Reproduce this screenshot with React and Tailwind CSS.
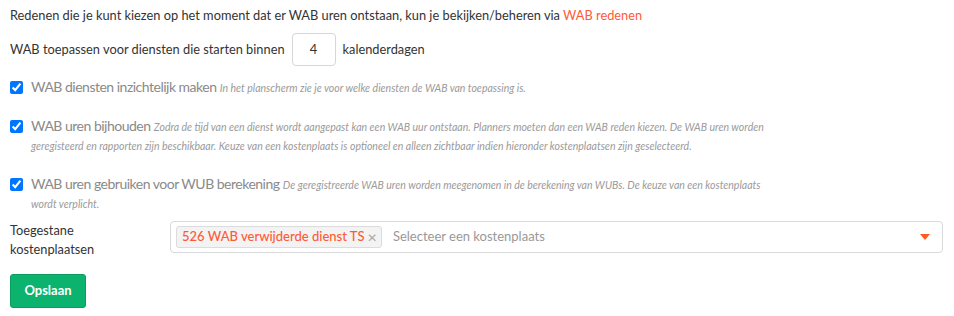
import React from 'react';

const Option = ({ title, children }) => (
  <label className="flex items-start gap-2">
    <input
      type="checkbox"
      checked
      readOnly
      className="mt-[3px] h-[13px] w-[13px] shrink-0 accent-[#0075ff]"
    />
    <span className="w-[745px] leading-[18px]">
      <span className="text-[14px] tracking-[-0.5px] text-[#8a8a8a]">{title}</span>{' '}
      <span className="text-[10.5px] italic text-[#9a9a9a]">{children}</span>
    </span>
  </label>
);

export default function App() {
  return (
    <div className="px-[10px] pt-[6px] font-['Lato','Noto_Sans',sans-serif] text-[12.8px] text-[#333]">
      <p className="leading-[18px]">
        Redenen die je kunt kiezen op het moment dat er WAB uren ontstaan, kun je bekijken/beheren via{' '}
        <a className="text-[#ff5a36]">WAB redenen</a>
      </p>

      <div className="mt-[9px] flex items-center gap-[7px]">
        <span>WAB toepassen voor diensten die starten binnen</span>
        <div className="flex h-[33px] w-[44px] items-center justify-center rounded-[4px] border border-[#d6d6d6] text-[#333]">
          4
        </div>
        <span>kalenderdagen</span>
      </div>

      <div className="mt-[12px] flex flex-col gap-[20px]">
        <Option title="WAB diensten inzichtelijk maken">
          In het planscherm zie je voor welke diensten de WAB van toepassing is.
        </Option>
        <Option title="WAB uren bijhouden">
          Zodra de tijd van een dienst wordt aangepast kan een WAB uur ontstaan. Planners moeten dan een WAB reden kiezen. De WAB uren worden geregisteerd en rapporten zijn beschikbaar. Keuze van een kostenplaats is optioneel en alleen zichtbaar indien hieronder kostenplaatsen zijn geselecteerd.
        </Option>
        <Option title="WAB uren gebruiken voor WUB berekening">
          De geregistreerde WAB uren worden meegenomen in de berekening van WUBs. De keuze van een kostenplaats wordt verplicht.
        </Option>
      </div>

      <div className="mt-[8px] flex items-start">
        <div className="w-[160px] leading-[19px]">
          Toegestane
          <br />
          kostenplaatsen
        </div>
        <div className="flex h-[32px] w-[773px] items-center rounded-[4px] border border-[#d9d9d9] pl-[5px] pr-[12px]">
          <span className="flex h-[22px] items-center gap-[3px] rounded-[3px] border border-[#dcdcdc] bg-[#f3f3f3] pl-[5px] pr-[4px] text-[13px] font-medium text-[#ff5a36]">
            526 WAB verwijderde dienst TS
            <span className="text-[16px] leading-none text-[#aaa]">×</span>
          </span>
          <span className="ml-[11px] flex-1 text-[13px] text-[#999]">Selecteer een kostenplaats</span>
          <svg width="10" height="6" viewBox="0 0 10 6">
            <path d="M0 0h10L5 6z" fill="#ff5a1f" />
          </svg>
        </div>
      </div>

      <button className="mt-[15px] h-[34px] w-[76px] rounded-[3px] border border-[#0a9d5e] bg-[#0cb36f] text-[13px] font-bold text-white">
        Opslaan
      </button>
    </div>
  );
}
